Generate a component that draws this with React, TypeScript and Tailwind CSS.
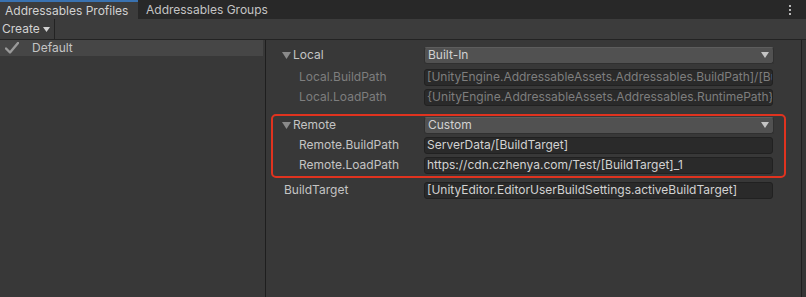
import React from "react";

const Tri = ({ cls }: { cls: string }) => (
  <svg width="9" height="8" viewBox="0 0 9 8" className={cls}>
    <polygon points="0,1 9,1 4.5,8" fill="currentColor" />
  </svg>
);

const Dropdown = ({ value }: { value: string }) => (
  <div className="w-[350px] h-[17px] bg-[#515151] rounded-[3px] border border-[#303030] border-t-[#5d5d5d] flex items-center justify-between pl-[3px] pr-[4px] text-[#d2d2d2]">
    <span>{value}</span>
    <svg width="8" height="6" viewBox="0 0 8 6" className="text-[#c4c4c4]">
      <polygon points="0,0 8,0 4,6" fill="currentColor" />
    </svg>
  </div>
);

const Field = ({ value, disabled }: { value: string; disabled?: boolean }) => (
  <div
    className={
      "w-[349px] h-[17px] bg-[#2a2a2a] rounded-[3px] border border-[#212121] flex items-center pl-[2px] overflow-hidden whitespace-nowrap " +
      (disabled ? "text-[#7e7e7e]" : "text-[#d2d2d2]")
    }
  >
    {value}
  </div>
);

export default function App() {
  return (
    <div
      className="w-[806px] h-[297px] bg-[#383838] flex flex-col overflow-hidden text-[12px] leading-none text-[#c4c4c4]"
      style={{ fontFamily: "Inter, 'Liberation Sans', sans-serif" }}
    >
      {/* Tab bar */}
      <div className="h-[19px] bg-[#282828] flex items-stretch relative whitespace-nowrap">
        <div className="w-[138px] bg-[#3c3c3c] border-t-2 border-[#3a72b0] flex items-center pl-[5px] text-[#d2d2d2]">
          Addressables Profiles
        </div>
        <div className="w-[130px] flex items-center pl-[8px] pt-[1px] text-[#c4c4c4]">Addressables Groups</div>
        <div className="flex-1" />
        <div className="w-[16px] flex flex-col items-center justify-center gap-[2px] mr-[8px]">
          <div className="w-[2px] h-[2px] bg-[#b8b8b8]" />
          <div className="w-[2px] h-[2px] bg-[#b8b8b8]" />
          <div className="w-[2px] h-[2px] bg-[#b8b8b8]" />
        </div>
      </div>
      {/* Toolbar */}
      <div className="h-[21px] bg-[#3c3c3c] border-b border-[#232323] flex items-stretch">
        <div className="w-[55px] border-r border-[#232323] flex items-center pl-[2px] gap-[3px] text-[#d2d2d2]">
          <span>Create</span>
          <svg width="7" height="5" viewBox="0 0 7 5" className="text-[#d2d2d2]">
            <polygon points="0,0 7,0 3.5,5" fill="currentColor" />
          </svg>
        </div>
      </div>
      {/* Body */}
      <div className="flex-1 flex">
        <div className="w-[266px] border-r border-[#1e1e1e] pr-[2px]">
          <div className="h-[16px] bg-[#464646] flex items-center">
            <svg width="14" height="12" viewBox="0 0 14 12" className="ml-[5px]">
              <path d="M1 6.5 L5 10.5 L13 1" stroke="#9a9a9a" strokeWidth="2.4" fill="none" strokeLinecap="round" strokeLinejoin="round" />
            </svg>
            <span className="ml-[13px] text-[#c4c4c4]">Default</span>
          </div>
        </div>
        <div className="w-[536px] border-r border-[#1f1f1f] pt-[6px] flex flex-col">
          {/* Local */}
          <div className="h-[18px] flex items-center">
            <div className="w-[158px] flex items-center pl-[16px] gap-[2px]">
              <Tri cls="text-[#8a8a8a]" />
              <span>Local</span>
            </div>
            <Dropdown value="Built-In" />
          </div>
          <div className="h-[18px] mt-[4px] flex items-center">
            <div className="w-[158px] pl-[33px] text-[#7e7e7e]">Local.BuildPath</div>
            <Field disabled value="[UnityEngine.AddressableAssets.Addressables.BuildPath]/[BuildTarget]" />
          </div>
          <div className="h-[18px] mt-[2px] flex items-center">
            <div className="w-[158px] pl-[33px] text-[#7e7e7e]">Local.LoadPath</div>
            <Field disabled value="{UnityEngine.AddressableAssets.Addressables.RuntimePath}/[BuildTarget]" />
          </div>
          {/* Remote in red box */}
          <div className="mt-[8px] ml-[5px] mr-[15px] h-[64px] border-2 border-[#e0331f] rounded-[5px] flex flex-col">
            <div className="h-[18px] flex items-center">
              <div className="w-[151px] flex items-center pl-[9px] gap-[2px]">
                <Tri cls="text-[#8a8a8a]" />
                <span>Remote</span>
              </div>
              <Dropdown value="Custom" />
            </div>
            <div className="h-[18px] mt-[2px] flex items-center">
              <div className="w-[151px] pl-[26px]">Remote.BuildPath</div>
              <Field value="ServerData/[BuildTarget]" />
            </div>
            <div className="h-[18px] mt-[2px] flex items-center">
              <div className="w-[151px] pl-[26px]">Remote.LoadPath</div>
              <Field value="https://cdn.czhenya.com/Test/[BuildTarget]_1" />
            </div>
          </div>
          <div className="h-[18px] mt-[3px] flex items-center">
            <div className="w-[158px] pl-[18px]">BuildTarget</div>
            <Field value="[UnityEditor.EditorUserBuildSettings.activeBuildTarget]" />
          </div>
        </div>
        <div className="flex-1 bg-[#353535]" />
      </div>
    </div>
  );
}
